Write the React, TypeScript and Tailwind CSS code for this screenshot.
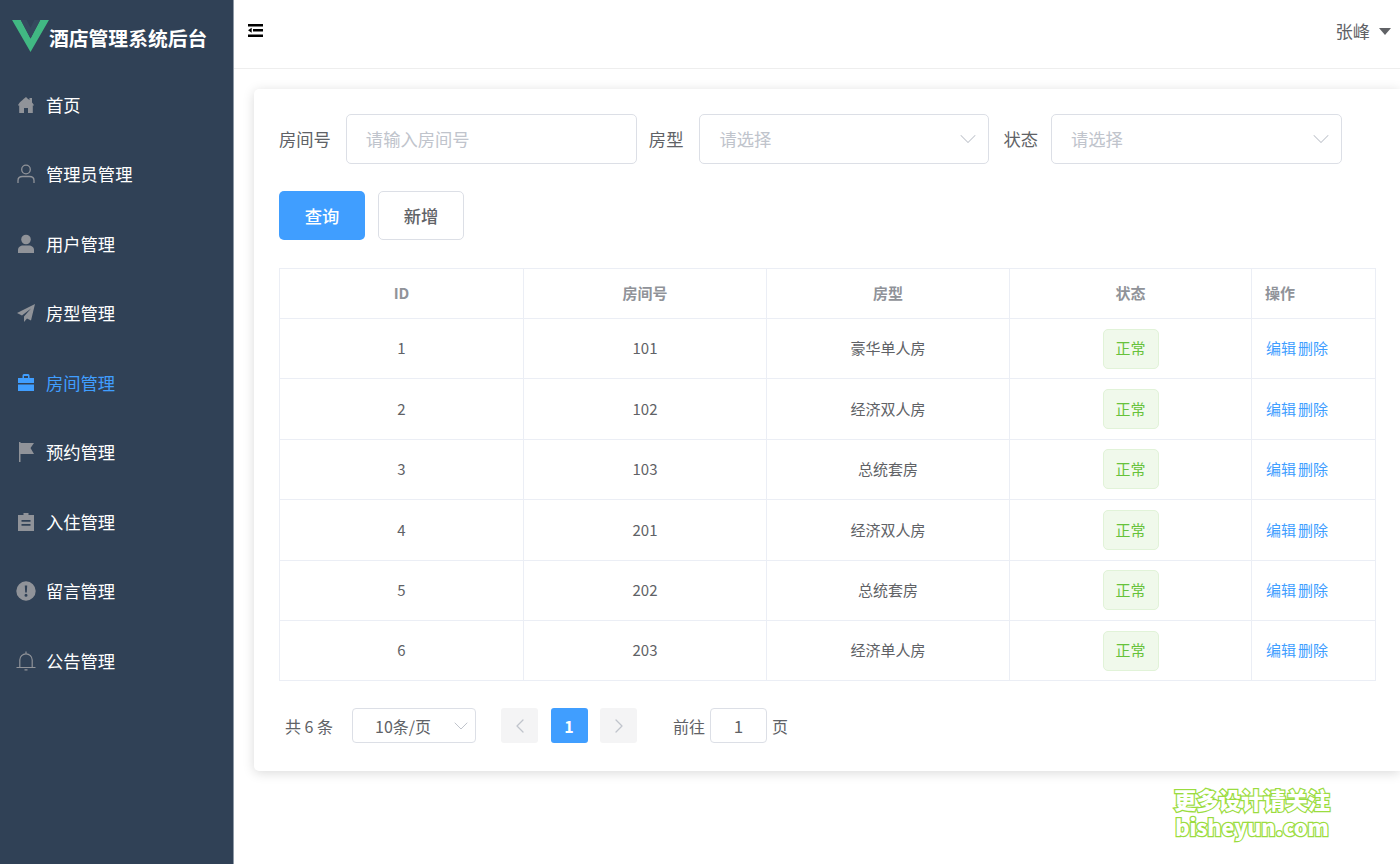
import { ChevronDown, ChevronLeft, ChevronRight } from "lucide-react";
import type { ReactNode } from "react";

const icons: Record<string, ReactNode> = {
  home: <path d="M10 2c1 1.200 2.500 2.200 3.500 3V3H16v4.500c1 1 1.700 1.800 2 3h-1.200V18H12v-5H8v5H3.200v-7.500H2C2.500 8 7 4.500 10 2z" fill="currentColor" />,
  admin: (
    <g fill="none" stroke="currentColor" strokeWidth="1.300">
      <circle cx="10" cy="5.500" r="4.300" />
      <path d="M2 19v-2.500c0-2.500 2-4 4.500-4h7c2.500 0 4.500 1.500 4.500 4V19" />
    </g>
  ),
  user: (
    <g fill="currentColor">
      <circle cx="10" cy="5.500" r="4.800" />
      <path d="M2 19v-3c0-3 2.500-4.500 5-4.500h6c2.500 0 5 1.500 5 4.500v3z" />
    </g>
  ),
  plane: <path d="M19 1 1 10l5 2.500L15 5.500 8 13.500V19l3-3.500 4 2z" fill="currentColor" />,
  case: <path d="M6.500 5V2.500A1.500 1.500 0 0 1 8 1h4a1.500 1.500 0 0 1 1.500 1.500V5H18v5H2V5zM8 3v2h4V3zM2 11.500h16V18H2z" fill="currentColor" fillRule="evenodd" />,
  flag: <path d="M3 0h1.500v1H18l-3.500 5 3.500 6H4.500v8H3z" fill="currentColor" />,
  clip: <path d="M7.500 1h5v2H18v16H2V3h5.500zM5.500 8v1.800h9V8zm0 4v1.800h9V12z" fill="currentColor" fillRule="evenodd" />,
  alert: <path d="M10 .300a9.700 9.700 0 1 1 0 19.400A9.700 9.700 0 0 1 10 .300zM8.800 4.500l.4 7h1.600l.4-7zM10 12.800a1.500 1.500 0 1 0 0 3 1.500 1.500 0 0 0 0-3z" fill="currentColor" fillRule="evenodd" />,
  bell: (
    <g fill="none" stroke="currentColor" strokeWidth="1.200">
      <path d="M.500 16.500h19M3.800 16.500V9a6.200 6.200 0 0 1 12.400 0v7.500M10 .500v2.300M8.500 18.800h3" />
    </g>
  ),
};

const menu = [
  { key: "home", label: "首页" },
  { key: "admin", label: "管理员管理" },
  { key: "user", label: "用户管理" },
  { key: "plane", label: "房型管理" },
  { key: "case", label: "房间管理", active: true },
  { key: "flag", label: "预约管理" },
  { key: "clip", label: "入住管理" },
  { key: "alert", label: "留言管理" },
  { key: "bell", label: "公告管理" },
];

const rows = [
  ["1", "101", "豪华单人房"],
  ["2", "102", "经济双人房"],
  ["3", "103", "总统套房"],
  ["4", "201", "经济双人房"],
  ["5", "202", "总统套房"],
  ["6", "203", "经济单人房"],
];

function Select({ width, text }: { width: string; text: string }) {
  return (
    <div className={`flex h-[50px] items-center justify-between rounded-[5px] border border-[#dcdfe6] pl-[19px] pr-[6px] ${width}`}>
      <span className="text-[17.300px] text-[#c0c4cc]">{text}</span>
      <ChevronDown className="h-[28px] w-[28px] text-[#c0c4cc]" strokeWidth={0.9} />
    </div>
  );
}

export default function App() {
  return (
    <div className="flex h-[864px] w-[1400px] overflow-hidden bg-white font-['Noto_Sans_CJK_SC','Noto_Sans',sans-serif] text-[#606266]">
      <aside className="w-[234px] shrink-0 border-r border-[#8f9aa6] bg-[#304156]">
        <div className="flex h-[70px] items-center pl-3 pt-0.5">
          <svg viewBox="0 0 38 34" className="-mt-0.5 h-[33px] w-[37px] shrink-0">
            <path d="M0 1h9l10 19L29 1h9L19 34z" fill="#41b883" />
            <path d="M9 1h6l4 8 4-8h6L19 20z" fill="#35495e" />
          </svg>
          <span className="mt-[3px] whitespace-nowrap text-[19.800px] font-bold text-white">酒店管理系统后台</span>
        </div>
        <nav>
          {menu.map((m) => (
            <div key={m.key} className={`flex h-[69.500px] items-center pl-[16px] text-[17.300px] ${m.active ? "text-[#409eff]" : "text-white"}`}>
              <svg viewBox="0 0 20 20" className={`h-5 w-5 ${m.active ? "text-[#409eff]" : "text-[#909399]"}`}>
                {icons[m.key]}
              </svg>
              <span className="ml-[10px]">{m.label}</span>
            </div>
          ))}
        </nav>
      </aside>
      <main className="min-w-0 flex-1">
        <header className="flex h-[69px] items-center justify-between border-b border-[#eeeeee] pb-[7px] pl-[14px] pr-[9px]">
          <svg viewBox="0 0 15 13" className="h-[13px] w-[15px] text-black" fill="currentColor">
            <path d="M0 0h15v2.500H0zM5 5h10v2.500H5zM0 10.500h15V13H0zM3.700 3.800v5L0 6.300z" />
          </svg>
          <div className="flex items-center gap-[9px] text-[17.300px] text-[#606266]">
            <span>张峰</span>
            <span className="mt-0.5 h-0 w-0 border-x-[6px] border-t-[7px] border-x-transparent border-t-[#606266]" />
          </div>
        </header>
        <section className="ml-5 mt-5 h-[682px] rounded-l-[5px] bg-white pl-[25px] pt-[25px] shadow-[0_2px_12px_0_rgba(0,0,0,0.15)]">
          <div className="flex items-center text-[17.300px]">
            <span className="mr-[15px]">房间号</span>
            <div className="flex h-[50px] w-[291px] items-center rounded-[5px] border border-[#dcdfe6] pl-[19px] text-[#c0c4cc]">请输入房间号</div>
            <span className="ml-3 mr-[16px]">房型</span>
            <Select width="w-[290px]" text="请选择" />
            <span className="ml-[14px] mr-[13px]">状态</span>
            <Select width="w-[291px]" text="请选择" />
          </div>
          <div className="mt-[27px] flex gap-[13px]">
            <div className="flex h-[49px] w-[86px] items-center justify-center rounded-[5px] bg-[#409eff] text-[17.300px] font-medium text-white">查询</div>
            <div className="flex h-[49px] w-[86px] items-center justify-center rounded-[5px] border border-[#dcdfe6] text-[17.300px] font-medium">新增</div>
          </div>
          <table className="mt-7 w-[1097px] table-fixed border-collapse text-[15px]">
            <colgroup>
              <col className="w-[244px]" />
              <col className="w-[243px]" />
              <col className="w-[243px]" />
              <col className="w-[242px]" />
              <col />
            </colgroup>
            <thead>
              <tr className="h-[50px] font-semibold text-[#909399]">
                {["ID", "房间号", "房型", "状态"].map((h) => (
                  <th key={h} className="border border-[#ebeef5] font-semibold">{h}</th>
                ))}
                <th className="border border-[#ebeef5] pl-[13px] text-left font-semibold">操作</th>
              </tr>
            </thead>
            <tbody>
              {rows.map((r) => (
                <tr key={r[0]} className="h-[60.400px]">
                  {r.map((c, i) => (
                    <td key={i} className="border border-[#ebeef5] text-center">{c}</td>
                  ))}
                  <td className="border border-[#ebeef5]">
                    <span className="mx-auto flex h-[40px] w-[56px] items-center justify-center rounded-[5px] border border-[#e1f3d8] bg-[#f0f9eb] text-[#67c23a]">正常</span>
                  </td>
                  <td className="border border-[#ebeef5] pl-[14px] text-[#409eff]">
                    <div className="flex gap-[2px]">
                      <span>编辑</span>
                      <span>删除</span>
                    </div>
                  </td>
                </tr>
              ))}
            </tbody>
          </table>
          <div className="mt-[27px] flex items-center pl-[6px] text-[16px]">
            <span>共 6 条</span>
            <div className="ml-[19px] flex h-[35px] w-[124px] items-center justify-between rounded-[4px] border border-[#dcdfe6] pl-[22px] pr-[2px]">
              <span>10条/页</span>
              <ChevronDown className="h-6 w-6 text-[#c0c4cc]" strokeWidth={1} />
            </div>
            <div className="ml-[25px] flex h-[35px] w-[37px] items-center justify-center rounded-[3px] bg-[#f4f4f5] text-[#c0c4cc]"><ChevronLeft className="h-6 w-6" strokeWidth={1.300} /></div>
            <div className="ml-[12.500px] flex h-[35px] w-[37px] items-center justify-center rounded-[3px] bg-[#409eff] font-bold text-white">1</div>
            <div className="ml-[12.500px] flex h-[35px] w-[37px] items-center justify-center rounded-[3px] bg-[#f4f4f5] text-[#c0c4cc]"><ChevronRight className="h-6 w-6" strokeWidth={1.300} /></div>
            <span className="ml-9">前往</span>
            <div className="ml-[5px] flex h-[35px] w-[57px] items-center justify-center rounded-[4px] border border-[#dcdfe6] text-[17px]">1</div>
            <span className="ml-[5px]">页</span>
          </div>
        </section>
        <div className="absolute left-[1174px] top-[786px] w-[156px] text-center font-black leading-[27px] text-white [-webkit-text-stroke:2.500px_#9bdc3f] [paint-order:stroke_fill]">
          <div className="whitespace-nowrap text-[22.300px]">更多设计请关注</div>
          <div className="whitespace-nowrap text-[21.600px]">bisheyun.com</div>
        </div>
      </main>
    </div>
  );
}
